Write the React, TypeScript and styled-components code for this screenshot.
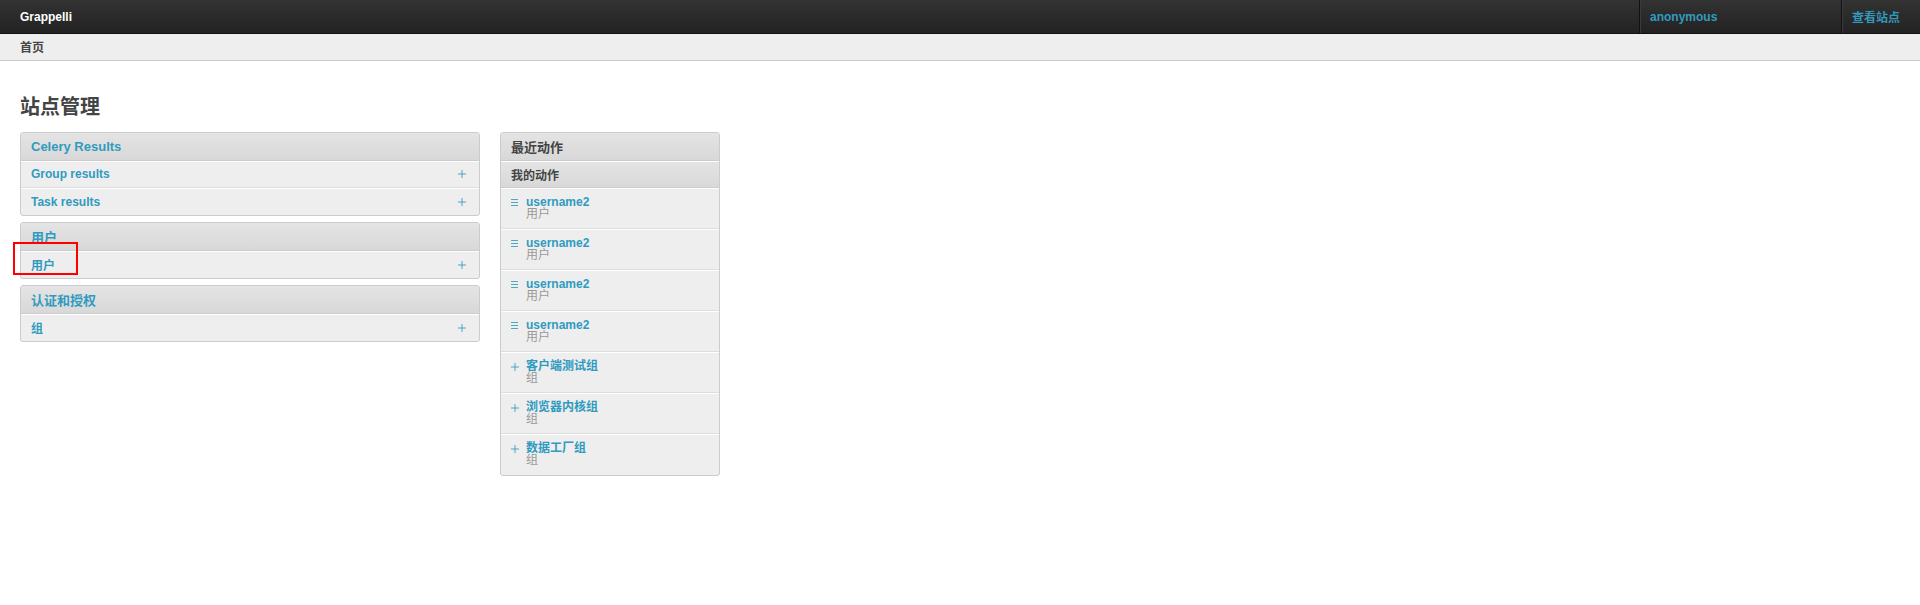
import React from "react";
import styled, { createGlobalStyle } from "styled-components";

const GlobalStyle = createGlobalStyle`
  html, body {
    margin: 0;
    padding: 0;
    background: #fff;
    font-family: "Liberation Sans", Arial, "Noto Sans CJK SC", sans-serif;
    font-size: 12px;
    color: #444;
  }
  * { box-sizing: border-box; }
`;

const blue = "#309bbf";

const Header = styled.header`
  display: flex;
  align-items: stretch;
  height: 34px;
  background: linear-gradient(180deg, #333 0%, #222 100%);
  border-bottom: 1px solid #111;
`;

const Brand = styled.div`
  flex: 1;
  display: flex;
  align-items: center;
  padding-left: 20px;
  color: #fff;
  font-weight: bold;
  font-size: 12px;
`;

const NavCell = styled.div<{ $width: number }>`
  width: ${(p) => p.$width}px;
  display: flex;
  align-items: center;
  padding-left: 10px;
  border-left: 1px solid #111;
  box-shadow: inset 1px 0 0 #3a3a3a;
  color: ${blue};
  font-weight: bold;
  font-size: 12px;
`;

const Breadcrumbs = styled.div`
  height: 27px;
  background: #eee;
  border-bottom: 1px solid #ccc;
  display: flex;
  align-items: center;
  padding: 0 20px 2px;
  font-weight: bold;
  color: #444;
`;

const Content = styled.main`
  padding: 33px 20px 0;
`;

const Title = styled.h1`
  margin: 0 0 12px;
  font-size: 20px;
  line-height: 26px;
  font-weight: bold;
  color: #444;
`;

const Columns = styled.div`
  display: flex;
  gap: 20px;
  align-items: flex-start;
`;

const LeftColumn = styled.div`
  width: 460px;
  display: flex;
  flex-direction: column;
  gap: 6px;
  position: relative;
`;

const Module = styled.section<{ $width?: number }>`
  width: ${(p) => (p.$width ? `${p.$width}px` : "100%")};
  border: 1px solid #ccc;
  border-radius: 3px;
  background: #eee;
  overflow: hidden;
`;

const ModuleHead = styled.h2<{ $dark?: boolean }>`
  margin: 0;
  height: 28px;
  padding: 0 10px 1px;
  display: flex;
  align-items: center;
  font-size: 13px;
  font-weight: bold;
  color: ${(p) => (p.$dark ? "#444" : blue)};
  background: linear-gradient(180deg, #e4e4e4 0%, #d8d8d8 100%);
  border-bottom: 1px solid #ccc;
`;

const SubHead = styled.h3`
  margin: 0;
  height: 27px;
  padding: 0 10px 1px;
  display: flex;
  align-items: center;
  font-size: 12px;
  font-weight: bold;
  color: #444;
  background: linear-gradient(180deg, #e4e4e4 0%, #d8d8d8 100%);
  border-top: 1px solid #fff;
  border-bottom: 1px solid #ccc;
`;

const Row = styled.div`
  height: 27px;
  display: flex;
  align-items: center;
  justify-content: space-between;
  padding: 0 13px 1px 10px;
  border-top: 1px solid #fff;
  border-bottom: 1px solid #ddd;
  &:last-child { border-bottom: none; }
  font-weight: bold;
  color: ${blue};
`;

const PlusIcon = ({ size = 8 }: { size?: number }) => (
  <svg width={size} height={size} viewBox="0 0 8 8" style={{ display: "block" }}>
    <path d="M4 0v8M0 4h8" stroke={blue} strokeWidth="1" fill="none" opacity="0.85" />
  </svg>
);

const ListIcon = () => (
  <svg width="7" height="7" viewBox="0 0 7 7" style={{ display: "block" }}>
    <path d="M0 0.5h7M0 3.5h7M0 6.5h7" stroke={blue} strokeWidth="1" fill="none" opacity="0.85" />
  </svg>
);

const Marker = styled.div`
  position: absolute;
  left: -7px;
  top: 110px;
  width: 65px;
  height: 33px;
  border: 2px solid #f00;
  pointer-events: none;
`;

const ActionRow = styled.div`
  height: 41px;
  display: flex;
  align-items: flex-start;
  padding: 7px 10px 0;
  border-top: 1px solid #fff;
  border-bottom: 1px solid #ddd;
  &:last-child { border-bottom: none; }
`;

const ActionIcon = styled.span`
  width: 15px;
  height: 13px;
  display: flex;
  align-items: center;
`;

const ActionText = styled.div`
  display: flex;
  flex-direction: column;
`;

const ActionName = styled.span`
  color: ${blue};
  font-weight: bold;
  font-size: 12px;
  line-height: 13px;
`;

const ActionType = styled.span`
  color: #999;
  font-size: 12px;
  line-height: 11px;
`;

const actions = [
  { icon: "list", name: "username2", type: "用户" },
  { icon: "list", name: "username2", type: "用户" },
  { icon: "list", name: "username2", type: "用户" },
  { icon: "list", name: "username2", type: "用户" },
  { icon: "add", name: "客户端测试组", type: "组" },
  { icon: "add", name: "浏览器内核组", type: "组" },
  { icon: "add", name: "数据工厂组", type: "组" },
];

const modules = [
  { title: "Celery Results", rows: ["Group results", "Task results"] },
  { title: "用户", rows: ["用户"] },
  { title: "认证和授权", rows: ["组"] },
];

export default function App() {
  return (
    <>
      <GlobalStyle />
      <Header>
        <Brand>Grappelli</Brand>
        <NavCell $width={202}>anonymous</NavCell>
        <NavCell $width={79}>查看站点</NavCell>
      </Header>
      <Breadcrumbs>首页</Breadcrumbs>
      <Content>
        <Title>站点管理</Title>
        <Columns>
          <LeftColumn>
            {modules.map((m) => (
              <Module key={m.title}>
                <ModuleHead>{m.title}</ModuleHead>
                {m.rows.map((r) => (
                  <Row key={r}>
                    <span>{r}</span>
                    <PlusIcon />
                  </Row>
                ))}
              </Module>
            ))}
            <Marker />
          </LeftColumn>
          <Module $width={220}>
            <ModuleHead $dark>最近动作</ModuleHead>
            <SubHead>我的动作</SubHead>
            {actions.map((a, i) => (
              <ActionRow key={i}>
                <ActionIcon>{a.icon === "list" ? <ListIcon /> : <PlusIcon size={8} />}</ActionIcon>
                <ActionText>
                  <ActionName>{a.name}</ActionName>
                  <ActionType>{a.type}</ActionType>
                </ActionText>
              </ActionRow>
            ))}
          </Module>
        </Columns>
      </Content>
    </>
  );
}
